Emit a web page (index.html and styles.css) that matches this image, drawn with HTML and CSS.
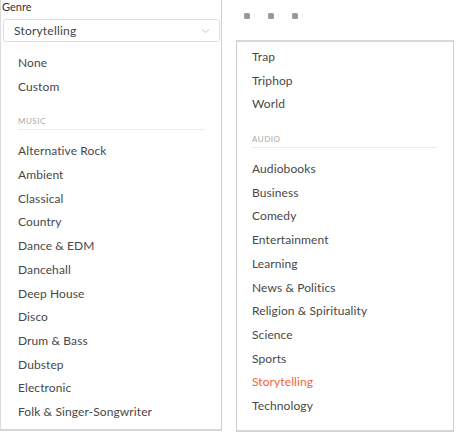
FILE: index.html
```html
<!DOCTYPE html>
<html>
<head>
<meta charset="utf-8">
<link rel="stylesheet" href="styles.css">
</head>
<body>
<div class="page">
  <div class="left">
    <div class="label">Genre</div>
    <div class="select">
      <span>Storytelling</span>
      <svg class="chev" width="9" height="6" viewBox="0 0 9 6"><path d="M1 1.5 L4.5 4.5 L8 1.5" fill="none" stroke="#c8c8c8" stroke-width="1"/></svg>
    </div>
    <div class="menu">
      <div class="item first">None</div>
      <div class="item">Custom</div>
      <div class="section">MUSIC</div>
      <div class="item">Alternative Rock</div>
      <div class="item">Ambient</div>
      <div class="item">Classical</div>
      <div class="item">Country</div>
      <div class="item">Dance &amp; EDM</div>
      <div class="item">Dancehall</div>
      <div class="item">Deep House</div>
      <div class="item">Disco</div>
      <div class="item">Drum &amp; Bass</div>
      <div class="item">Dubstep</div>
      <div class="item">Electronic</div>
      <div class="item">Folk &amp; Singer-Songwriter</div>
    </div>
  </div>
  <div class="right">
    <div class="dots"><i></i><i></i><i></i></div>
    <div class="menu2">
      <div class="item">Trap</div>
      <div class="item">Triphop</div>
      <div class="item">World</div>
      <div class="section">AUDIO</div>
      <div class="item">Audiobooks</div>
      <div class="item">Business</div>
      <div class="item">Comedy</div>
      <div class="item">Entertainment</div>
      <div class="item">Learning</div>
      <div class="item">News &amp; Politics</div>
      <div class="item">Religion &amp; Spirituality</div>
      <div class="item">Science</div>
      <div class="item">Sports</div>
      <div class="item active">Storytelling</div>
      <div class="item">Technology</div>
    </div>
  </div>
</div>
</body>
</html>
```
FILE: styles.css
```css
html, body {
  margin: 0;
  padding: 0;
  background: #fff;
}
body {
  font-family: "Lato", "Open Sans", sans-serif;
  color: #444;
  width: 460px;
  height: 434px;
  overflow: hidden;
}
.page {
  display: flex;
  align-items: flex-start;
}
.left {
  width: 220px;
  height: 429px;
  border-left: 1px solid #dcdcdc;
  border-right: 1px solid #d0d0d0;
  border-bottom: 2px solid #d6d6d6;
  box-sizing: content-box;
  display: flex;
  flex-direction: column;
}
.label {
  font-size: 11px;
  color: #333;
  padding: 0 0 0 1px;
  height: 19px;
  line-height: 14px;
}
.select {
  margin: 0 1px 0 2px;
  height: 21px;
  border: 1px solid #dedede;
  border-radius: 3px;
  display: flex;
  align-items: center;
  justify-content: space-between;
  padding: 0 9px 0 10px;
  font-size: 12px;
  color: #444;
  letter-spacing: 0.2px;
}
.chev { margin-top: 1px; }
.menu {
  padding-top: 9px;
  padding-left: 17px;
  padding-right: 16px;
}
.item {
  height: 23.7px;
  line-height: 23.7px;
  font-size: 12px;
  color: #484848;
  letter-spacing: 0.1px;
  white-space: nowrap;
}
.section {
  font-size: 8px;
  color: #aaa;
  letter-spacing: 0.5px;
  margin-top: 17px;
  height: 14px;
  line-height: 12px;
  border-bottom: 1px solid #ececec;
  margin-bottom: 9px;
}
.right {
  margin-left: 14px;
  display: flex;
  flex-direction: column;
}
.dots {
  display: flex;
  gap: 18px;
  padding: 13px 0 0 8px;
  height: 27px;
  box-sizing: border-box;
}
.dots i {
  width: 6px;
  height: 6px;
  border-radius: 1.5px;
  background: #999;
}
.menu2 {
  width: 218px;
  height: 392px;
  border: 1px solid #d0d0d0;
  border-top: 2px solid #d8d8d8;
  border-bottom: 2px solid #d6d6d6;
  margin-top: 13px;
  box-sizing: border-box;
  padding: 3px 16px 0 15px;
}
.active {
  color: #f0643c;
}
```
